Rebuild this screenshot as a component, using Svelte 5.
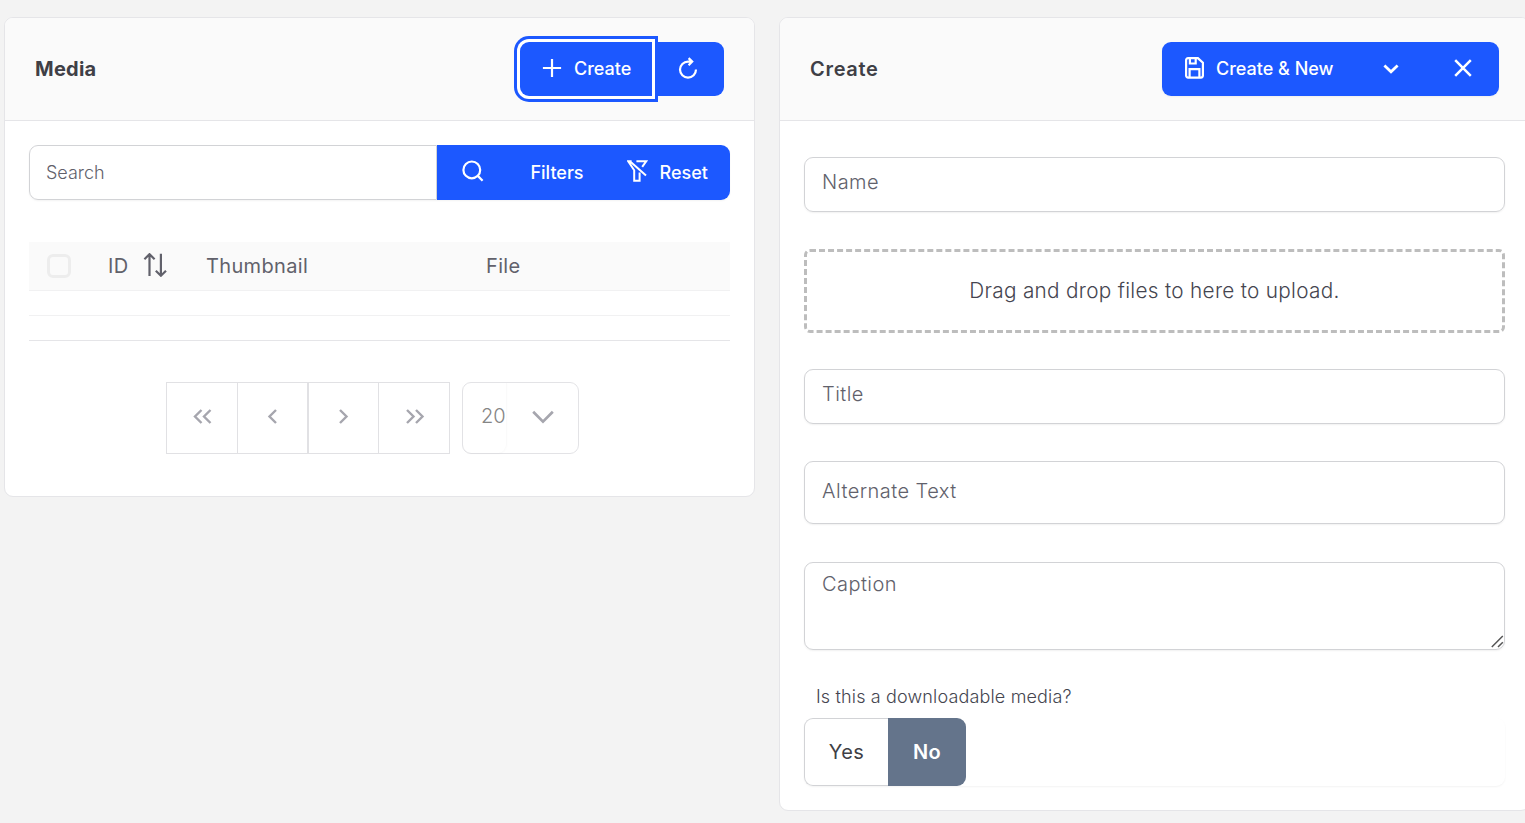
<script>
  const pages = ['M10.5 3 4 9.5l6.5 6.5M19.5 3 13 9.5l6.5 6.5', 'M12 3 5.5 9.5 12 16', 'M5 3 11.5 9.5 5 16', 'M4 3 10.5 9.5 4 16M13 3 19.5 9.5 13 16'];
  const widths = [23, 17, 17, 23];
</script>

<main>
  <section class="card media">
    <header>
      <h2 class="bold">Media</h2>
      <div class="group">
        <button class="btn create">
          <svg width="20" height="20" viewBox="0 0 20 20"><path d="M10 .9v18.2M.9 10h18.2" /></svg>
          <span>Create</span>
        </button>
        <button class="btn refresh" aria-label="Refresh">
          <svg width="20" height="24" viewBox="0 0 20 24"><path d="M18 12.6A8 8 0 1 1 10 4.6h3.8M10.6 1.1 14.2 4.6 10.6 8.2" /></svg>
        </button>
      </div>
    </header>
    <div class="body">
      <div class="search">
        <div class="query"><span>Search</span></div>
        <button class="btn find" aria-label="Find">
          <svg width="22" height="22" viewBox="0 0 22 22"><circle cx="9.8" cy="9.9" r="8.4" /><path d="m15.8 15.9 4.8 4.8" /></svg>
        </button>
        <button class="btn filters"><span>Filters</span></button>
        <button class="btn reset">
          <svg width="21" height="22" viewBox="0 0 21 22"><path d="M4.6 1.3H1.2l6 9v10.4h5.4v-8.2M3.2 1.6 19 15.6M9.4 1.3h9.8l-4 5.5" /></svg>
          <span>Reset</span>
        </button>
      </div>
      <div class="thead">
        <i class="check"></i>
        <span class="id">ID</span>
        <svg width="24" height="24" viewBox="0 0 24 24"><path d="M6.5 23V1.2M1.4 6.2l5.1-5 5.1 5M17.9.8v22M12.8 17.7l5.1 5 5.1-5" /></svg>
        <span class="thumb">Thumbnail</span>
        <span>File</span>
      </div>
      <div class="line"></div>
      <div class="line last"></div>
      <div class="pager">
        {#each pages as d, i}
          <button class="page" aria-label="Page"><svg width={widths[i]} height="19" viewBox="0 0 {widths[i]} 19"><path {d} /></svg></button>
        {/each}
        <div class="size">
          <div class="num"><span>20</span></div>
          <svg width="22" height="14" viewBox="0 0 22 14"><path d="m1.2 1.8 9.8 9.8 9.8-9.8" /></svg>
        </div>
      </div>
    </div>
  </section>

  <section class="card form">
    <header>
      <h2>Create</h2>
      <div class="group shade">
        <button class="btn save">
          <svg width="20" height="22" viewBox="0 0 20 22"><path d="M1.1 3.2A2 2 0 0 1 3.1 1.1h9.8l5 4.7v12.8a2 2 0 0 1-2 2H3.1a2 2 0 0 1-2-2zM4.9 1.1v5.4h5.8V1.1M4.6 20.4v-8.3h9.8v8.3" /></svg>
          <span>Create &amp; New</span>
        </button>
        <button class="btn more" aria-label="More"><svg width="16" height="10" viewBox="0 0 16 10"><path d="m1.4 1.6 6.6 6.2 6.6-6.2" /></svg></button>
        <button class="btn close" aria-label="Close"><svg width="18" height="18" viewBox="0 0 18 18"><path d="m1.2 1.2 15.6 15.6M16.8 1.2 1.2 16.8" /></svg></button>
      </div>
    </header>
    <div class="fields">
      <div class="field name"><span>Name</span></div>
      <div class="drop"><span>Drag and drop files to here to upload.</span></div>
      <div class="field title"><span>Title</span></div>
      <div class="field alt"><span>Alternate Text</span></div>
      <div class="field caption">
        <span>Caption</span>
        <svg width="13" height="13" viewBox="0 0 13 13"><path d="M.8 12 11.8 1M7 12l4.8-4.8" /></svg>
      </div>
      <div class="question"><span>Is this a downloadable media?</span></div>
      <div class="toggle"><button class="yes"><span>Yes</span></button><button class="no"><span>No</span></button></div>
    </div>
  </section>
</main>

<style>
  :global(body) { background: #f3f3f3; overflow: hidden; }
  main { box-sizing: border-box; width: 1531px; height: 823px; padding: 17px 0 0 4px; display: flex; align-items: flex-start; gap: 24px; font: 300 20px/24px Inter, sans-serif; color: #61616b; overflow: hidden; }
  main * { box-sizing: border-box; }
  span { white-space: nowrap; }
  svg { flex: none; display: block; fill: none; stroke: currentColor; stroke-width: 2.2; }
  button { font: inherit; border: 0; margin: 0; padding: 0; background: none; color: inherit; display: flex; align-items: center; }
  .card { flex: none; width: 751px; background: #fff; border: 1px solid #e5e5e8; border-radius: 9px; overflow: hidden; }
  .media { height: 480px; }
  .form { height: 794px; }
  header { height: 103px; padding: 0 30px; display: flex; align-items: center; justify-content: space-between; background: #fafafa; border-bottom: 1px solid #e5e5e8; }
  h2 { margin: 0; font-size: 20px; line-height: 24px; font-weight: 600; color: #3f3f46; letter-spacing: .7px; }
  h2.bold { font-weight: 700; letter-spacing: .25px; }
  .group { display: flex; height: 54px; border-radius: 9px; }
  .shade { box-shadow: 0 1px 2px rgba(0, 0, 0, .05); }
  .btn { height: 100%; background: #1c58ff; color: #fff; font-weight: 500; font-size: 18px; }
  .create { width: 132px; padding-left: 22px; gap: 12px; border-radius: 9px 0 0 9px; box-shadow: 0 0 0 3px #fff, 0 0 0 6px #1c58ff; position: relative; z-index: 1; }
  .create svg { margin-top: -2px; }
  .refresh { width: 72px; padding-left: 26px; border-radius: 0 9px 9px 0; }
  .save { width: 192px; padding-left: 23px; gap: 11px; border-radius: 9px 0 0 9px; }
  .save svg { margin-top: -2px; }
  .more { width: 73px; justify-content: center; }
  .more svg { stroke-width: 2.8; margin-top: -1px; }
  .close { width: 72px; justify-content: center; border-radius: 0 9px 9px 0; }
  .close svg { stroke-width: 2.5; margin-top: -2px; }
  .body { padding: 24px 24px 0; }
  .search { height: 55px; display: flex; border-radius: 9px; box-shadow: 0 1px 2px rgba(0, 0, 0, .05); }
  .query { width: 408px; padding-left: 16px; display: flex; align-items: center; border: 1px solid #d2d3d6; border-radius: 9px 0 0 9px; font-size: 18px; }
  .find { width: 71px; padding: 0 0 3px 25px; }
  .filters { width: 98px; justify-content: center; }
  .reset { width: 124px; padding-left: 21px; gap: 11.5px; border-radius: 0 9px 9px 0; }
  .reset svg { margin-bottom: 3px; stroke-width: 2; }
  .thead { height: 49px; margin-top: 42px; padding-left: 18px; display: flex; align-items: center; background: #fafafa; border-bottom: 1px solid #f1f1f2; font-weight: 400; letter-spacing: .35px; }
  .check { width: 24px; height: 24px; border: 3px solid #ededed; border-radius: 6px; }
  .id { width: 35px; margin-left: 37px; }
  .thead svg { margin-top: -2px; margin-right: 39px; }
  .thumb { width: 280px; }
  .line { height: 25px; border-bottom: 1px solid #f1f1f2; }
  .last { border-color: #e5e5e8; }
  .pager { display: flex; height: 72px; margin: 41px 0 0 137px; color: #a6a6ae; }
  .page { width: 71px; justify-content: center; border: 1px solid #e1e1e4; border-left: 0; }
  .page:first-child { width: 72px; border-left: 1px solid #e1e1e4; }
  .page:nth-child(2) { width: 70px; }
  .page:nth-child(3) { border-left: 1px solid #e1e1e4; }
  .page svg { margin-top: -3px; stroke-width: 2.4; }
  .size { width: 117px; margin-left: 12px; display: flex; align-items: center; border: 1px solid #e3e3e6; border-radius: 9px; }
  .num { width: 44px; height: 70px; padding: 21px 0 0 18px; border-right: 1px solid #fafafa; border-radius: 0 0 9px 9px; box-shadow: 0 1px 2px rgba(0, 0, 0, .025); color: #858585; }
  .size svg { margin: -2px 0 0 24.5px; stroke-width: 2.7; }
  .fields { padding: 36px 24px 0; letter-spacing: .45px; }
  .field { width: 701px; height: 55px; padding: 12px 17px; border: 1px solid #d2d3d6; border-radius: 9px; box-shadow: 0 1px 2px rgba(0, 0, 0, .06); }
  .drop { width: 701px; height: 84px; margin: 37px 0 36px; display: flex; align-items: center; justify-content: center; border: 3px dashed #bdbdbd; border-radius: 6px; color: #45454f; letter-spacing: .3px; font-size: 20.75px; }
  .alt { height: 63px; margin: 37px 0 38px; padding-top: 17px; }
  .caption { height: 88px; padding: 9px 0 1px 17px; display: flex; justify-content: space-between; }
  .caption svg { align-self: flex-end; stroke: #555; stroke-width: 1.5; }
  .question { padding: 35px 0 0 12px; font-size: 18px; color: #45454f; letter-spacing: .15px; }
  .toggle { display: flex; width: 701px; height: 68px; margin-top: 9px; box-shadow: 0 1px 2px rgba(0, 0, 0, .05); font-weight: 400; border-radius: 9px; }
  .toggle button { justify-content: center; letter-spacing: .4px; }
  .yes { width: 84px; border: 1px solid #d2d3d6; border-right: 0; border-radius: 9px 0 0 9px; color: #3f3f46; }
  .no { width: 78px; background: #64748b; color: #fff; border-radius: 0 9px 9px 0; font-weight: 600; }
</style>
